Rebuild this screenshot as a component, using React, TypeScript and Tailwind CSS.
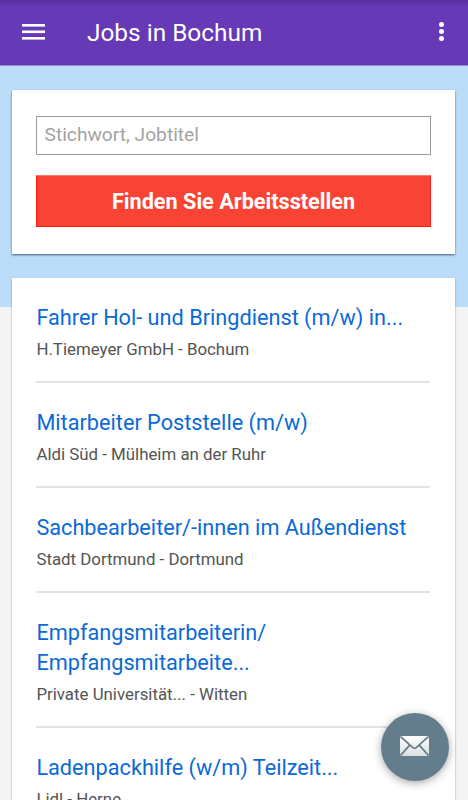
type Job = {
  title: string;
  employer: string;
  city: string;
};

const jobs: Job[] = [
  {
    title: "Fahrer Hol- und Bringdienst (m/w) in...",
    employer: "H.Tiemeyer GmbH",
    city: "Bochum",
  },
  {
    title: "Mitarbeiter Poststelle (m/w)",
    employer: "Aldi Süd",
    city: "Mülheim an der Ruhr",
  },
  {
    title: "Sachbearbeiter/-innen im Außendienst",
    employer: "Stadt Dortmund",
    city: "Dortmund",
  },
  {
    title: "Empfangsmitarbeiterin/ Empfangsmitarbeite...",
    employer: "Private Universität...",
    city: "Witten",
  },
  {
    title: "Ladenpackhilfe (w/m) Teilzeit...",
    employer: "Lidl",
    city: "Herne",
  },
];

function Header() {
  return (
    <header className="flex h-[66px] shrink-0 items-center border-b border-[#a08ad8] bg-[#6639b6] bg-linear-to-b from-[#55309a] to-[#6639b6] to-[6px] px-[22px] text-white">
      <button aria-label="Menü" className="flex pb-[1.5px]">
        <svg width="23" height="16" viewBox="0 0 23 16" fill="currentColor">
          <rect width="23" height="2.6" />
          <rect y="6.5" width="23" height="2.6" />
          <rect y="13" width="23" height="2.6" />
        </svg>
      </button>
      <h1 className="ml-[42px] text-[24.4px] leading-8">Jobs in Bochum</h1>
      <button
        aria-label="Mehr"
        className="mr-[2px] ml-auto flex flex-col gap-[2px] pb-[1.5px]"
      >
        <span className="size-[5px] rounded-full bg-white" />
        <span className="size-[5px] rounded-full bg-white" />
        <span className="size-[5px] rounded-full bg-white" />
      </button>
    </header>
  );
}

function SearchCard() {
  return (
    <form className="h-[164px] w-[443px] bg-white px-6 pt-[26px] shadow-[0_1px_2px_rgba(20,50,80,0.75)]">
      <input
        type="text"
        placeholder="Stichwort, Jobtitel"
        className="block h-[39px] w-[395px] border border-[#9b9b9b] bg-white px-[7.5px] pb-[2px] text-[19.2px] placeholder:text-[#a3a3a3]"
      />
      <button
        type="button"
        className="mt-5 block h-[52px] w-[395px] border border-t-[#f87a6c] border-r-[#ff1a10] border-b-[#ff1a10] border-l-[#ff1a10] bg-[#f94435] pt-[2px] text-[21.65px] font-bold text-white"
      >
        Finden Sie Arbeitsstellen
      </button>
    </form>
  );
}

function JobItem({ job }: { job: Job }) {
  return (
    <li className="border-b-2 border-[#e3e3e3] pt-[25px] pb-5">
      <a href="#" className="block text-[21.7px] leading-[30px] text-[#0b6ad6]">
        {job.title}
      </a>
      <p className="mt-1 text-[16.85px] leading-6 text-[#545454]">
        {job.employer} - {job.city}
      </p>
    </li>
  );
}

export default function App() {
  return (
    <div className="relative flex h-[800px] w-[468px] flex-col overflow-hidden bg-[#f4f4f4] font-[Roboto,sans-serif]">
      <Header />
      <main className="bg-linear-to-b from-[#bbddfa] from-[241px] to-[#f4f4f4] to-[241px] px-3 pt-6">
        <SearchCard />
        <ul className="mt-6 w-[443px] bg-white pr-[25px] pl-[24.4px] shadow-[0_1px_2px_rgba(0,0,0,0.35)]">
          {jobs.map((job) => (
            <JobItem key={job.title} job={job} />
          ))}
        </ul>
      </main>
      <button
        aria-label="Nachricht"
        className="absolute right-[19.5px] bottom-[19.5px] flex size-[67.5px] items-center justify-center rounded-full bg-[#637d8c] pb-[1px] shadow-[0_2px_8px_rgba(0,0,0,0.35)]"
      >
        <svg width="29" height="20" viewBox="0 0 29 20">
          <defs>
            <linearGradient id="paper" x1="0" y1="0" x2="0" y2="1">
              <stop offset="0" stopColor="#fdfdfd" />
              <stop offset="1" stopColor="#dcdfe1" />
            </linearGradient>
          </defs>
          <rect width="29" height="20" rx="1" fill="url(#paper)" />
          <path
            d="M0.5 0.5 L12.5 11.4 Q14.5 13 16.5 11.4 L28.5 0.5 M0.5 19.5 L9.5 9.4 M28.5 19.5 L19.5 9.4"
            fill="none"
            stroke="#637d8c"
            strokeWidth="1.7"
          />
        </svg>
      </button>
    </div>
  );
}
